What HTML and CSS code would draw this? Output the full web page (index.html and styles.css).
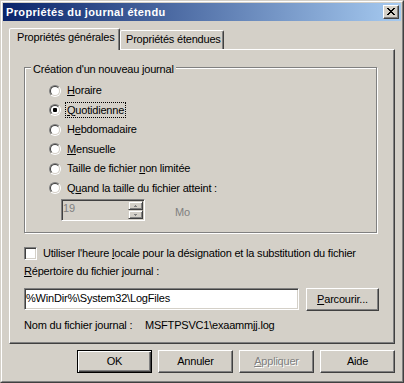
FILE: index.html
```html
<!DOCTYPE html>
<html lang="fr">
<head>
<meta charset="utf-8">
<title>Propriétés du journal étendu</title>
<link rel="stylesheet" href="styles.css">
</head>
<body>
<div class="window">
  <div class="frame">
    <div class="titlebar">
      <span class="title">Propriétés du journal étendu</span>
      <button class="close" aria-label="Fermer"><svg width="8" height="7" viewBox="0 0 8 7" shape-rendering="crispEdges"><path fill="#000" d="M0 0h2v1H0zM6 0h2v1H6zM1 1h2v1H1zM5 1h2v1H5zM2 2h4v1H2zM3 3h2v1H3zM2 4h4v1H2zM1 5h2v1H1zM5 5h2v1H5zM0 6h2v1H0zM6 6h2v1H6z"/></svg></button>
    </div>
    <div class="content">
      <div class="tabs">
        <div class="tab active">Propriétés générales</div>
        <div class="tab">Propriétés étendues</div>
      </div>
      <div class="panel">
        <div class="group">
          <div class="legend">Création d'un nouveau journal</div>
          <div class="radios">
            <div class="row"><span class="radio"></span><span class="lbl"><u>H</u>oraire</span></div>
            <div class="row"><span class="radio checked"></span><span class="lbl focus"><u>Q</u>uotidienne</span></div>
            <div class="row"><span class="radio"></span><span class="lbl">H<u>e</u>bdomadaire</span></div>
            <div class="row"><span class="radio"></span><span class="lbl"><u>M</u>ensuelle</span></div>
            <div class="row"><span class="radio"></span><span class="lbl">Taille de fichier <u>n</u>on limitée</span></div>
            <div class="row"><span class="radio"></span><span class="lbl">Q<u>u</u>and la taille du fichier atteint :</span></div>
          </div>
          <div class="spin-row">
            <div class="spin">
              <span class="spin-val">19</span>
              <div class="spin-btns">
                <span class="sb"><svg width="3" height="2" viewBox="0 0 3 2" shape-rendering="crispEdges"><path fill="#808080" d="M1 0h1v1H1zM0 1h3v1H0z"/></svg></span>
                <span class="sb"><svg width="3" height="2" viewBox="0 0 3 2" shape-rendering="crispEdges"><path fill="#808080" d="M0 0h3v1H0zM1 1h1v1H1z"/></svg></span>
              </div>
            </div>
            <span class="unit">Mo</span>
          </div>
        </div>
        <div class="check-row"><span class="checkbox"></span><span>Utiliser l'heure <u>l</u>ocale pour la désignation et la substitution du fichier</span></div>
        <div class="label"><u>R</u>épertoire du fichier journal :</div>
        <div class="path-row">
          <div class="edit">%WinDir%\System32\LogFiles</div>
          <button class="btn browse"><span><u>P</u>arcourir...</span></button>
        </div>
        <div class="name-row"><span class="name-key">Nom du fichier journal :</span><span>MSFTPSVC1\exaammjj.log</span></div>
      </div>
      <div class="actions">
        <button class="btn default">OK</button>
        <button class="btn">Annuler</button>
        <button class="btn disabled"><span><u>A</u>ppliquer</span></button>
        <button class="btn">Aide</button>
      </div>
    </div>
  </div>
</div>
</body>
</html>
```
FILE: styles.css
```css
* { box-sizing: border-box; }

body {
  margin: 0;
  background: #d4d0c8;
  font-family: "Liberation Sans", Arial, sans-serif;
  font-size: 11px;
  line-height: 13px;
  letter-spacing: -0.2px;
  color: #000;
}

u { text-decoration-thickness: 1px; text-underline-offset: 1px; }

.window {
  width: 404px;
  height: 383px;
  border: 1px solid;
  border-color: #d4d0c8 #404040 #404040 #d4d0c8;
  background: #d4d0c8;
}

.frame {
  height: 100%;
  border: 1px solid;
  border-color: #fff #808080 #808080 #fff;
  padding: 1px;
  display: flex;
  flex-direction: column;
}

.titlebar {
  flex: none;
  height: 18px;
  display: flex;
  align-items: center;
  justify-content: space-between;
  padding: 0 2px 0 3px;
  background: linear-gradient(to right, #0a246a, #a6caf0);
}

.title {
  color: #fff;
  font-weight: bold;
  letter-spacing: 0.35px;
}

.close {
  width: 16px;
  height: 14px;
  margin: 0;
  padding: 2px 0 0 3px;
  display: flex;
  align-items: flex-start;
  border: 1px solid;
  border-color: #fff #404040 #404040 #fff;
  box-shadow: inset -1px -1px #808080;
  background: #d4d0c8;
}
.close svg { display: block; }

.content {
  flex: 1;
  padding: 7px 6px 0;
  display: flex;
  flex-direction: column;
}

.tabs {
  height: 21px;
  display: flex;
  align-items: flex-end;
}

.tab {
  width: 104px;
  height: 19px;
  padding: 2px 0 0 5px;
  border: 1px solid;
  border-bottom: 0;
  border-color: #fff #404040 transparent #fff;
  border-radius: 2px 2px 0 0;
  box-shadow: inset -1px 0 #808080;
  background: #d4d0c8;
  white-space: nowrap;
}

.tab.active {
  position: relative;
  z-index: 1;
  width: 111px;
  height: 22px;
  margin-bottom: -1px;
  padding-left: 7px;
}

.panel {
  height: 295px;
  border: 1px solid;
  border-color: #fff #404040 #404040 #fff;
  box-shadow: inset -1px -1px #808080;
  padding: 17px 15px 0 14px;
  display: flex;
  flex-direction: column;
}

.group {
  position: relative;
  width: 353px;
  height: 166px;
  border: 1px solid #808080;
  box-shadow: inset 1px 1px #fff, 1px 1px #fff;
  padding: 16px 0 0 24px;
}

.legend {
  position: absolute;
  top: -5px;
  left: 6px;
  padding: 0 2px;
  background: #d4d0c8;
}

.radios {
  display: flex;
  flex-direction: column;
  gap: 6.5px;
}

.row {
  height: 13px;
  display: flex;
  align-items: center;
}

.radio {
  position: relative;
  flex: none;
  width: 12px;
  height: 12px;
  border-radius: 50%;
  border: 1px solid;
  border-color: #808080 #fff #fff #808080;
}
.radio::before {
  content: "";
  position: absolute;
  inset: 0;
  border-radius: 50%;
  border: 1px solid;
  border-color: #404040 #d4d0c8 #d4d0c8 #404040;
  background: #fff;
}
.radio.checked::after {
  content: "";
  position: absolute;
  left: 3px;
  top: 3px;
  width: 4px;
  height: 4px;
  border-radius: 1px;
  background: #000;
}

.lbl {
  margin: -2px 0 -1px 4px;
  padding: 1px 1px 0 1px;
  border: 1px solid transparent;
  white-space: nowrap;
}
.lbl.focus { border: 1px dotted #000; }

.spin-row {
  display: flex;
  margin: 4.5px 0 0 12px;
}

.spin {
  width: 84px;
  height: 22px;
  padding: 1px;
  border: 1px solid;
  border-color: #808080 #fff #fff #808080;
  box-shadow: inset 1px 1px #404040, inset -1px -1px #d4d0c8;
  display: flex;
  justify-content: space-between;
}

.spin-val {
  color: #808080;
  padding: 1px 0 0 0;
}

.spin-btns {
  width: 15px;
  display: flex;
  flex-direction: column;
}

.sb {
  height: 9px;
  border: 1px solid;
  border-color: #d4d0c8 #404040 #404040 #d4d0c8;
  box-shadow: inset 1px 1px #fff, inset -1px -1px #808080;
  display: flex;
  align-items: center;
  justify-content: center;
}
.sb svg { display: block; }

.unit {
  margin: 7px 0 0 30px;
  color: #808080;
}

.check-row {
  margin-top: 14px;
  height: 13px;
  display: flex;
  align-items: center;
  gap: 6px;
  white-space: nowrap;
}

.checkbox {
  flex: none;
  width: 13px;
  height: 13px;
  border: 1px solid;
  border-color: #808080 #fff #fff #808080;
  box-shadow: inset 1px 1px #404040, inset -1px -1px #d4d0c8;
  background: #fff;
}

.label { margin-top: 5px; }

.path-row {
  margin-top: 10px;
  display: flex;
  justify-content: space-between;
  align-items: flex-start;
}

.edit {
  width: 275px;
  height: 22px;
  padding: 3px 1px 0;
  border: 1px solid;
  border-color: #808080 #fff #fff #808080;
  box-shadow: inset 1px 1px #404040, inset -1px -1px #d4d0c8;
  background: #fff;
  white-space: nowrap;
}

.btn {
  width: 75px;
  height: 23px;
  margin: 0;
  padding: 0;
  font: inherit;
  letter-spacing: inherit;
  color: #000;
  border: 1px solid;
  border-color: #fff #404040 #404040 #fff;
  box-shadow: inset -1px -1px #808080;
  background: #d4d0c8;
  display: flex;
  align-items: center;
  justify-content: center;
}

.btn.browse { width: 73px; }

.btn.default {
  border-color: #000;
  box-shadow: inset 1px 1px #fff, inset -1px -1px #404040, inset -2px -2px #808080;
}

.btn.disabled {
  color: #808080;
  text-shadow: 1px 1px 0 #fff;
}

.name-row {
  margin-top: 8px;
  display: flex;
}
.name-key { width: 121px; }

.actions {
  margin-top: 6px;
  display: flex;
  justify-content: flex-end;
  gap: 6px;
}
```
